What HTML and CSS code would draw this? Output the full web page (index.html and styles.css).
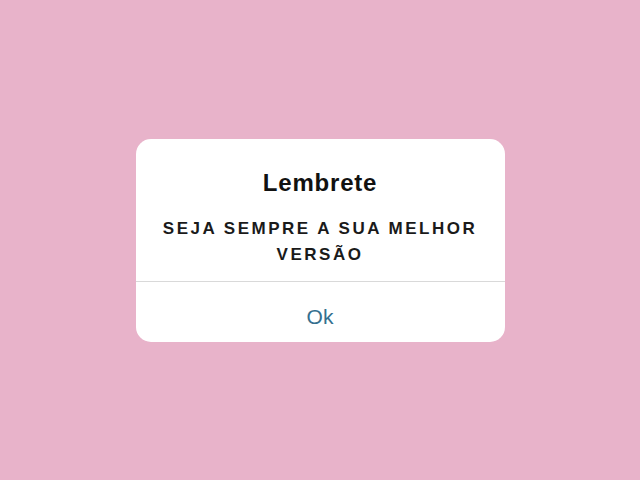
FILE: index.html
```html
<!DOCTYPE html>
<html lang="pt">
<head>
    <meta charset="UTF-8">
    <meta name="viewport" content="width=device-width, initial-scale=1.0">
    <title>Lembrete</title>
    <link rel="stylesheet" href="styles.css">
</head>
<body>
    <div class="alert">
        <div class="alert-content">
            <h2 class="alert-title">Lembrete</h2>
            <p class="alert-message">Seja sempre a sua melhor versão</p>
        </div>
        <button class="alert-button">Ok</button>
    </div>
</body>
</html>
```

FILE: styles.css
```css
/* Fundo rosa da página */
body {
    font-family: 'Liberation Sans', Arial, sans-serif;
    margin: 0;
    padding: 0;
    background-color: #e8b3ca;
    display: flex;
    justify-content: center;
    align-items: center;
    height: 100vh;
}

/* Caixa do alerta */
.alert {
    background-color: #fff;
    border-radius: 15px;
    width: 369px;
    overflow: hidden;
}

.alert-content {
    padding: 30px 10px 13px;
    text-align: center;
    border-bottom: 1px solid #d9d9d9;
}

.alert-title {
    margin: 0;
    font-size: 24px;
    line-height: 28px;
    font-weight: 700;
    letter-spacing: 0.8px;
    color: #111;
}

.alert-message {
    margin: 19px 0 0;
    font-size: 17px;
    line-height: 26px;
    font-weight: 700;
    letter-spacing: 2.5px;
    text-transform: uppercase;
    color: #1a1a1a;
}

/* Botão Ok */
.alert-button {
    display: block;
    width: 100%;
    height: 60px;
    box-sizing: border-box;
    padding: 10px 0 0;
    border: none;
    background: transparent;
    font-family: inherit;
    font-size: 21px;
    line-height: 50px;
    color: #34708f;
    cursor: pointer;
}
```
